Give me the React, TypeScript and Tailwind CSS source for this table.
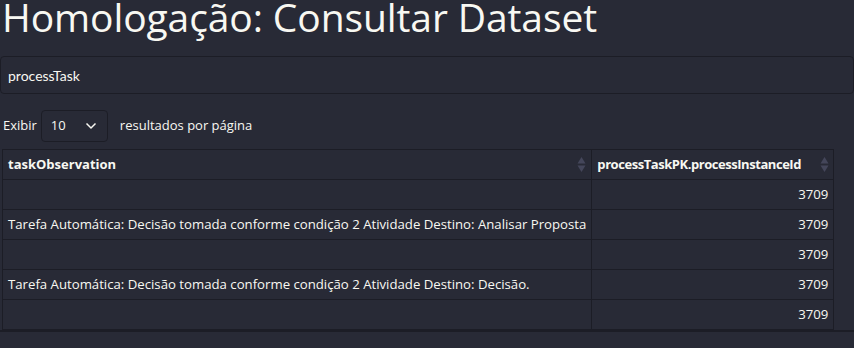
import React from 'react';

const rows = [
  '',
  'Tarefa Automática: Decisão tomada conforme condição 2 Atividade Destino: Analisar Proposta',
  '',
  'Tarefa Automática: Decisão tomada conforme condição 2 Atividade Destino: Decisão.',
  '',
];

const SortIcon: React.FC = () => (
  <svg width="9" height="17" viewBox="0 0 9 17" className="shrink-0">
    <path d="M4.5 1 L8.5 7.5 L0.5 7.5 Z" fill="#44465a" />
    <path d="M4.5 16 L8.5 9.5 L0.5 9.5 Z" fill="#44465a" />
  </svg>
);

export default function App() {
  return (
    <div
      className="w-[854px] h-[348px] overflow-hidden bg-[#282a36] text-[#f8f8f2]"
      style={{ fontFamily: '"Open Sans", "Noto Sans", sans-serif' }}
    >
      <h1 className="text-[39px] leading-[34px] font-medium pl-[2px] -tracking-[0.1px] mb-[22px]">
        Homologação: Consultar Dataset
      </h1>

      <div className="border border-[#1c1d26] rounded-[4px] h-[38px] flex items-center px-[7px]">
        <span className="text-[14px]" style={{ fontFamily: 'Lato, sans-serif' }}>
          processTask
        </span>
      </div>

      <div className="flex items-center h-[32px] mt-[16px] text-[13px] pl-[3px]">
        <span>Exibir</span>
        <div className="ml-[4px] w-[67px] h-[32px] border border-[#1c1d26] rounded-[4px] flex items-center pl-[9px] pr-[10px] justify-between">
          <span>10</span>
          <svg width="12" height="8" viewBox="0 0 12 8">
            <path d="M1.5 1.5 L6 6 L10.5 1.5" fill="none" stroke="#f8f8f2" strokeWidth="1.5" />
          </svg>
        </div>
        <span className="ml-[12px]">resultados por página</span>
      </div>

      <div className="mt-[7px] border-b-2 border-[#1c1d26] pl-[2px]">
        <table className="border-collapse text-[13.2px] border-l border-[#1c1d26]">
          <thead>
            <tr className="h-[30px]">
              <th className="border border-[#1c1d26] px-[5px] text-left font-bold text-[13px] w-[589px]">
                <div className="flex items-center justify-between">
                  <span>taskObservation</span>
                  <SortIcon />
                </div>
              </th>
              <th className="border border-[#1c1d26] pl-[5px] pr-[4px] text-left font-bold text-[13px] w-[242px]">
                <div className="flex items-center justify-between gap-[2px]">
                  <span className="tracking-[-0.45px]">processTaskPK.processInstanceId</span>
                  <SortIcon />
                </div>
              </th>
            </tr>
          </thead>
          <tbody>
            {rows.map((r, i) => (
              <tr key={i} className="h-[30px]">
                <td className="border border-[#1c1d26] px-[5px] whitespace-nowrap">{r}</td>
                <td className="border border-[#1c1d26] px-[5px] text-right">3709</td>
              </tr>
            ))}
          </tbody>
        </table>
      </div>
    </div>
  );
}
